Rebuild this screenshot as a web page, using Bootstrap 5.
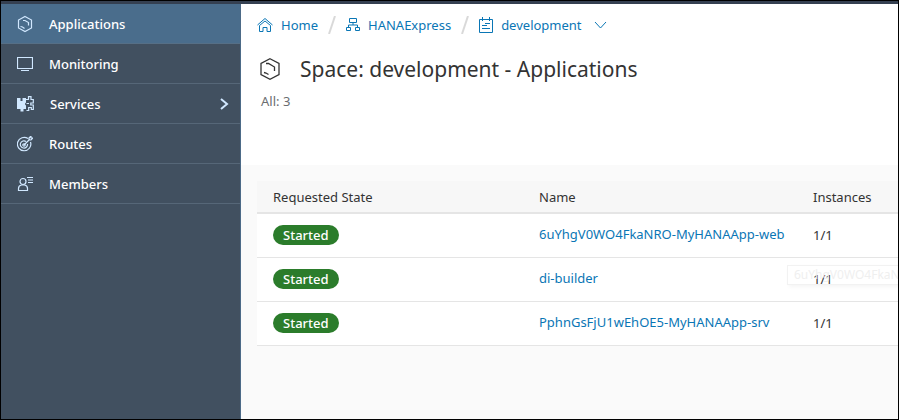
<!DOCTYPE html>
<html lang="en">
<head>
<meta charset="utf-8">
<meta name="viewport" content="width=device-width, initial-scale=1">
<title>Space: development - Applications</title>
<link href="https://cdn.jsdelivr.net/npm/bootstrap@5.3.0/dist/css/bootstrap.min.css" rel="stylesheet">
<style>
body { font-family: "Noto Sans", "Open Sans", sans-serif; font-size: 13px; line-height: 20px; color: #333; background: #fafafa; }
a { color: #0a76b5; text-decoration: none; }
svg { fill: none; stroke: currentColor; flex: none; display: block; }
.frame { border: 1px solid #000; }
.shell-strip { height: 3px; background: #354051; }
.side { width: 240px; background: #415060; border-right: 1px solid #4c6a87; }
.side .nav-link { height: 40px; padding: 0 11px 0 16px; gap: 16px; color: #fff; font-weight: 500; border-bottom: 1px solid #566778; border-radius: 0; }
.side .nav-link.active { background: #4a6d8c; border-bottom-color: #566f86; }
.side svg { color: #d1e8ff; stroke-width: 1.2; }
.page-head { background: #fff; min-height: 161px; padding: 11px 16px 0; }
.crumbs { column-gap: 8px; height: 20px; }
.slash { color: #d9d9d9; margin: 0 2px; }
.heading { font-size: 21px; line-height: 28px; font-weight: 400; }
.heading-row { gap: 19px; margin-top: 20px; padding-left: 2px; }
.total { color: #6a6d70; margin-top: 8px; padding-left: 4px; }
.apps { --bs-table-bg: #fff; --bs-table-color: #333; border-bottom: 1px solid #ccc; table-layout: fixed; }
.apps > :not(caption) > * > * { padding: 0 16px; vertical-align: middle; border-bottom: 1px solid #e5e5e5; height: 44px; white-space: nowrap; }
.apps > thead > tr > th { height: 32px; font-weight: 400; background: #f7f7f7; border-bottom: 2px solid #e5e5e5; }
.apps td a { display: block; padding-bottom: 2px; }
.state-col { width: 266px; }
.name-col { width: 274px; }
.state-pill { font-size: 13px; line-height: 20px; padding: 0 10px; font-weight: 500; background: #2b7c2b; }
.ghost-tip { left: 546px; right: 0; top: 100px; height: 20px; padding-left: 6px; line-height: 18px; color: #efefef; border: 1px solid #f2f2f2; border-right: 0; box-shadow: 2px 2px 4px #f5f5f5; font-size: 12px; }
</style>
</head>
<body>
<div class="frame min-vh-100 d-flex flex-column">
  <div class="shell-strip"></div>
  <div class="d-flex flex-grow-1">
    <nav class="side nav flex-column flex-nowrap flex-shrink-0" aria-label="Space">
      <a class="nav-link active d-flex align-items-center" href="#">
        <svg width="16" height="18" viewBox="0 0 16 18"><path d="M8 1.500 14.500 5v8L8 16.500 1.500 13V5zM6 5.500h2l3.500 2v3M3.500 11.500l2 .5 2 1.500"/></svg>Applications</a>
      <a class="nav-link d-flex align-items-center" href="#">
        <svg width="16" height="16" viewBox="0 0 16 16"><path d="M.5 1.500h15v11H.5zM4 14.500h8"/></svg>Monitoring</a>
      <a class="nav-link d-flex align-items-center" href="#">
        <svg width="17" height="16" viewBox="0 0 17 16"><path fill="currentColor" stroke="none" fill-rule="evenodd" d="M0 2h9v4.500q-2 1.500 0 3V13H6.500v2.500h-3V13H0zM3.500 2v3h2V2z"/><path d="M9 3.500h2.500V.7h2.500v2.800h2.300V7h-2.500v2h2.500v4.500h-2V11.500h-2.600v3H9.500M9.500 7.500H12"/></svg>Services
        <svg class="ms-auto" width="10" height="14" viewBox="0 0 10 14"><path stroke-width="2" d="m2 2 6 5-6 5"/></svg></a>
      <a class="nav-link d-flex align-items-center" href="#">
        <svg width="16" height="16" viewBox="0 0 16 16"><path d="M11 2.600A6.700 6.700 0 1 0 13.500 6M9 5.500A3.600 3.600 0 1 0 10.500 8M7 9l6-6M12 4V2l2-2v2h2l-2 2z"/><circle cx="7" cy="9" r="1.200"/></svg>Routes</a>
      <a class="nav-link d-flex align-items-center" href="#">
        <svg width="16" height="16" viewBox="0 0 16 16"><circle cx="6" cy="5.500" r="3"/><path d="M1.500 14.500v-2q0-3 3-3.500h3q3 .5 3 3.500v2zM10 1.500h6M11 4h5M11 6.500h5"/></svg>Members</a>
    </nav>
    <main class="flex-grow-1 overflow-hidden">
      <header class="page-head">
        <nav class="crumbs d-flex align-items-center" aria-label="Breadcrumb">
          <a href="#" class="d-flex align-items-center gap-2"><svg width="16" height="16" viewBox="0 0 16 16"><path d="m.5 8 7.500-6.500L15.500 8M2.500 8.500v6H6v-4h4v4h3.500v-6L8 4z"/></svg>Home</a>
          <svg class="slash" width="8" height="18" viewBox="0 0 8 18"><path stroke-width="2" d="M7 0 1 18"/></svg>
          <a href="#" class="d-flex align-items-center gap-2"><svg width="14" height="16" viewBox="0 0 14 16"><path d="M3.500 1.500h7v4h-7zM7 5.500V8M2.500 10.500V8h9v2.500M.5 10.500h4v3h-4zM9.500 10.500h4v3h-4z"/></svg>HANAExpress</a>
          <svg class="slash" width="8" height="18" viewBox="0 0 8 18"><path stroke-width="2" d="M7 0 1 18"/></svg>
          <a href="#" class="d-flex align-items-center gap-2"><svg width="14" height="16" viewBox="0 0 14 16"><path d="M.5 2.500h13v13H.5zM3.500 0v4M10.500 0v4M6 6.500h5M3 8.500h5M3 11.500h8"/></svg>development</a>
          <button class="btn p-0 border-0 ms-1" type="button" aria-label="Choose space"><svg width="13" height="8" viewBox="0 0 13 8" color="#0a76b5"><path d="m1 1 5.500 6L12 1"/></svg></button>
        </nav>
        <div class="heading-row d-flex align-items-center">
          <svg width="22" height="24" viewBox="0 0 22 24"><path stroke-width="1.300" d="M11 1.700 20 6.500v11l-9 4.800-9-4.800v-11zM7 6.500h2.500l6 3.500v4M5 15.500l2 .5 2.500 1.500"/></svg>
          <h1 class="heading m-0">Space: development - Applications</h1>
        </div>
        <p class="total mb-0">All: 3</p>
      </header>
      <section class="position-relative ps-3 pt-3">
        <table class="table apps mb-0">
          <colgroup><col class="state-col"><col class="name-col"><col></colgroup>
          <thead><tr><th scope="col">Requested State</th><th scope="col">Name</th><th scope="col">Instances</th></tr></thead>
          <tbody>
            <tr><td><span class="badge rounded-pill state-pill">Started</span></td><td><a href="#">6uYhgV0WO4FkaNRO-MyHANAApp-web</a></td><td>1/1</td></tr>
            <tr><td><span class="badge rounded-pill state-pill">Started</span></td><td><a href="#">di-builder</a></td><td>1/1</td></tr>
            <tr><td><span class="badge rounded-pill state-pill">Started</span></td><td><a href="#">PphnGsFjU1wEhOE5-MyHANAApp-srv</a></td><td>1/1</td></tr>
          </tbody>
        </table>
        <div class="ghost-tip position-absolute overflow-hidden text-nowrap" role="tooltip">6uYhgV0WO4FkaNRO</div>
      </section>
    </main>
  </div>
</div>
<script src="https://cdn.jsdelivr.net/npm/bootstrap@5.3.0/dist/js/bootstrap.bundle.min.js"></script>
</body>
</html>
